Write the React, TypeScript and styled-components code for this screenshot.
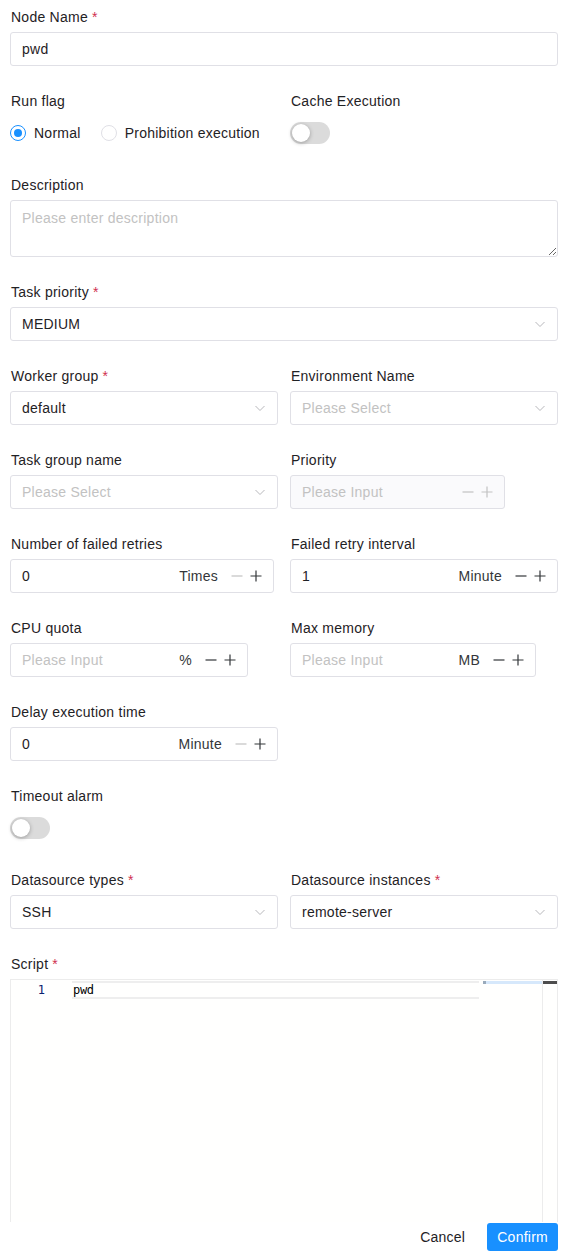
import React from "react";
import styled, { createGlobalStyle } from "styled-components";

const SANS = `"Liberation Sans", Arial, sans-serif`;

const Global = createGlobalStyle`
  html, body { margin: 0; padding: 0; background: #fff; }
  body { font-family: ${SANS}; font-size: 14px; letter-spacing: 0.25px; color: #1f2225; }
  * { box-sizing: border-box; }
`;

const Drawer = styled.div`
  width: 572px;
  height: 1259px;
  display: flex;
  flex-direction: column;
  background: #fff;
`;

const Body = styled.div`
  flex: 1;
  overflow: hidden;
  padding: 6px 14px 0 10px;
`;

const Grid = styled.div`
  display: grid;
  grid-template-columns: 268px 268px;
  column-gap: 12px;
`;

const Item = styled.div<{ $full?: boolean }>`
  grid-column: ${(p) => (p.$full ? "1 / -1" : "auto")};
  padding-bottom: 24px;
`;

const Label = styled.div`
  height: 26px;
  line-height: 22px;
  padding: 0 0 4px 1px;
  font-size: 14px;
  color: #1f2225;
`;

const Star = styled.span`
  color: #d03050;
  margin-left: 4px;
`;

const Box = styled.div<{ $w?: number; $disabled?: boolean }>`
  height: 34px;
  width: ${(p) => (p.$w ? `${p.$w}px` : "100%")};
  border: 1px solid #e0e0e6;
  border-radius: 3px;
  background: ${(p) => (p.$disabled ? "#fafafc" : "#fff")};
  display: flex;
  align-items: center;
  padding: 0 11px 0 11px;
  font-size: 14px;
`;

const Value = styled.span<{ $ph?: boolean }>`
  flex: 1;
  color: ${(p) => (p.$ph ? "#c2c2c2" : "#1f2225")};
  white-space: nowrap;
`;

const Suffix = styled.span`
  color: #333639;
  margin-right: 13px;
`;

const Step = styled.span<{ $off?: boolean }>`
  width: 12px;
  height: 12px;
  display: inline-flex;
  align-items: center;
  justify-content: center;
  color: ${(p) => (p.$off ? "#c2c2c2" : "#333639")};
  & + & { margin-left: 7px; }
`;

const TextArea = styled.textarea`
  display: block;
  width: 100%;
  height: 57px;
  border: 1px solid #e0e0e6;
  border-radius: 3px;
  padding: 6px 11px;
  font-family: ${SANS};
  font-size: 14px;
  letter-spacing: 0.25px;
  line-height: 22px;
  color: #1f2225;
  resize: vertical;
  outline: none;
  &::placeholder { color: #c2c2c2; }
`;

const Control = styled.div`
  height: 34px;
  display: flex;
  align-items: center;
`;

const RadioItem = styled.label`
  display: inline-flex;
  align-items: center;
  margin-right: 20px;
  font-size: 14px;
  white-space: nowrap;
  color: #1f2225;
`;

const RadioDot = styled.span<{ $on?: boolean }>`
  width: 16px;
  height: 16px;
  border-radius: 50%;
  border: 1px solid ${(p) => (p.$on ? "#1890ff" : "#e0e0e6")};
  margin-right: 8px;
  display: inline-flex;
  align-items: center;
  justify-content: center;
  &::after {
    content: "";
    width: 8px;
    height: 8px;
    border-radius: 50%;
    background: ${(p) => (p.$on ? "#1890ff" : "transparent")};
  }
`;

const Switch = styled.span`
  width: 40px;
  height: 22px;
  border-radius: 11px;
  background: #dbdbdb;
  position: relative;
  display: inline-block;
  &::after {
    content: "";
    position: absolute;
    left: 2px;
    top: 2px;
    width: 18px;
    height: 18px;
    border-radius: 50%;
    background: #fff;
    box-shadow: 0 1px 4px rgba(0, 0, 0, 0.3);
  }
`;

const Editor = styled.div`
  height: 320px;
  border: 1px solid #ececec;
  border-bottom: none;
  background: #fffffe;
  display: flex;
  font-family: Menlo, "DejaVu Sans Mono", monospace;
  font-size: 12px;
  letter-spacing: 0;
`;

const Gutter = styled.div`
  width: 61px;
  padding: 2px 27px 0 0;
  text-align: right;
  color: #0b216f;
  line-height: 16px;
`;

const Lines = styled.div`
  flex: 1;
  padding-top: 1px;
`;

const CurrentLine = styled.div`
  height: 18px;
  border-top: 2px solid #eeeeee;
  border-bottom: 2px solid #eeeeee;
  line-height: 14px;
  color: #000;
  padding-left: 1px;
  letter-spacing: -0.3px;
`;

const Minimap = styled.div`
  width: 63px;
  padding-top: 1px;
  &::before {
    content: "";
    display: block;
    height: 3px;
    margin-left: 4px;
    background: #d6e8fb;
    border-left: 3px solid #9ab;
  }
`;

const Scrollbar = styled.div`
  width: 15px;
  border-left: 1px solid #ececec;
  padding-top: 1px;
  &::before {
    content: "";
    display: block;
    height: 3px;
    background: #4d4d4d;
  }
`;

const Footer = styled.div`
  height: 37px;
  display: flex;
  justify-content: flex-end;
  align-items: flex-start;
  padding: 1px 14px 0 0;
  gap: 10px;
`;

const Button = styled.button<{ $primary?: boolean }>`
  height: 28px;
  border: none;
  border-radius: 3px;
  font-family: ${SANS};
  font-size: 14px;
  letter-spacing: 0.25px;
  background: ${(p) => (p.$primary ? "#1890ff" : "transparent")};
  color: ${(p) => (p.$primary ? "#fff" : "#1f2225")};
  padding: ${(p) => (p.$primary ? "0 10px" : "0 12px")};
`;

const Chevron = () => (
  <svg width="12" height="12" viewBox="0 0 12 12" fill="none">
    <path d="M1.5 4 L6 8.5 L10.5 4" stroke="#b8b8bc" strokeWidth="1" />
  </svg>
);

const Minus = ({ off }: { off?: boolean }) => (
  <Step $off={off}>
    <svg width="12" height="12" viewBox="0 0 12 12">
      <path d="M0.5 6 H11.5" stroke="currentColor" strokeWidth="1.2" />
    </svg>
  </Step>
);

const Plus = ({ off }: { off?: boolean }) => (
  <Step $off={off}>
    <svg width="12" height="12" viewBox="0 0 12 12">
      <path d="M0.5 6 H11.5 M6 0.5 V11.5" stroke="currentColor" strokeWidth="1.2" />
    </svg>
  </Step>
);

const FieldLabel = ({ text, req }: { text: string; req?: boolean }) => (
  <Label>
    {text}
    {req && <Star>*</Star>}
  </Label>
);

const Select = ({ value, ph }: { value: string; ph?: boolean }) => (
  <Box>
    <Value $ph={ph}>{value}</Value>
    <Chevron />
  </Box>
);

const NumberInput = ({
  value,
  ph,
  suffix,
  w,
  minusOff,
  plusOff,
  disabled,
}: {
  value: string;
  ph?: boolean;
  suffix?: string;
  w?: number;
  minusOff?: boolean;
  plusOff?: boolean;
  disabled?: boolean;
}) => (
  <Box $w={w} $disabled={disabled}>
    <Value $ph={ph}>{value}</Value>
    {suffix && <Suffix>{suffix}</Suffix>}
    <Minus off={minusOff} />
    <Plus off={plusOff} />
  </Box>
);

export default function App() {
  return (
    <Drawer>
      <Global />
      <Body>
        <Grid>
          <Item $full>
            <FieldLabel text="Node Name" req />
            <Box>
              <Value>pwd</Value>
            </Box>
          </Item>

          <Item>
            <FieldLabel text="Run flag" />
            <Control>
              <RadioItem>
                <RadioDot $on />
                Normal
              </RadioItem>
              <RadioItem>
                <RadioDot />
                Prohibition execution
              </RadioItem>
            </Control>
          </Item>
          <Item>
            <FieldLabel text="Cache Execution" />
            <Control>
              <Switch />
            </Control>
          </Item>

          <Item $full>
            <FieldLabel text="Description" />
            <TextArea placeholder="Please enter description" />
          </Item>

          <Item $full>
            <FieldLabel text="Task priority" req />
            <Select value="MEDIUM" />
          </Item>

          <Item>
            <FieldLabel text="Worker group" req />
            <Select value="default" />
          </Item>
          <Item>
            <FieldLabel text="Environment Name" />
            <Select value="Please Select" ph />
          </Item>

          <Item>
            <FieldLabel text="Task group name" />
            <Select value="Please Select" ph />
          </Item>
          <Item>
            <FieldLabel text="Priority" />
            <NumberInput value="Please Input" ph w={215} disabled minusOff plusOff />
          </Item>

          <Item>
            <FieldLabel text="Number of failed retries" />
            <NumberInput value="0" suffix="Times" w={264} minusOff />
          </Item>
          <Item>
            <FieldLabel text="Failed retry interval" />
            <NumberInput value="1" suffix="Minute" />
          </Item>

          <Item>
            <FieldLabel text="CPU quota" />
            <NumberInput value="Please Input" ph suffix="%" w={238} />
          </Item>
          <Item>
            <FieldLabel text="Max memory" />
            <NumberInput value="Please Input" ph suffix="MB" w={246} />
          </Item>

          <Item>
            <FieldLabel text="Delay execution time" />
            <NumberInput value="0" suffix="Minute" minusOff />
          </Item>
          <Item />

          <Item $full>
            <FieldLabel text="Timeout alarm" />
            <Control>
              <Switch />
            </Control>
          </Item>

          <Item>
            <FieldLabel text="Datasource types" req />
            <Select value="SSH" />
          </Item>
          <Item>
            <FieldLabel text="Datasource instances" req />
            <Select value="remote-server" />
          </Item>

          <Item $full>
            <FieldLabel text="Script" req />
            <Editor>
              <Gutter>1</Gutter>
              <Lines>
                <CurrentLine>pwd</CurrentLine>
              </Lines>
              <Minimap />
              <Scrollbar />
            </Editor>
          </Item>
        </Grid>
      </Body>
      <Footer>
        <Button>Cancel</Button>
        <Button $primary>Confirm</Button>
      </Footer>
    </Drawer>
  );
}
